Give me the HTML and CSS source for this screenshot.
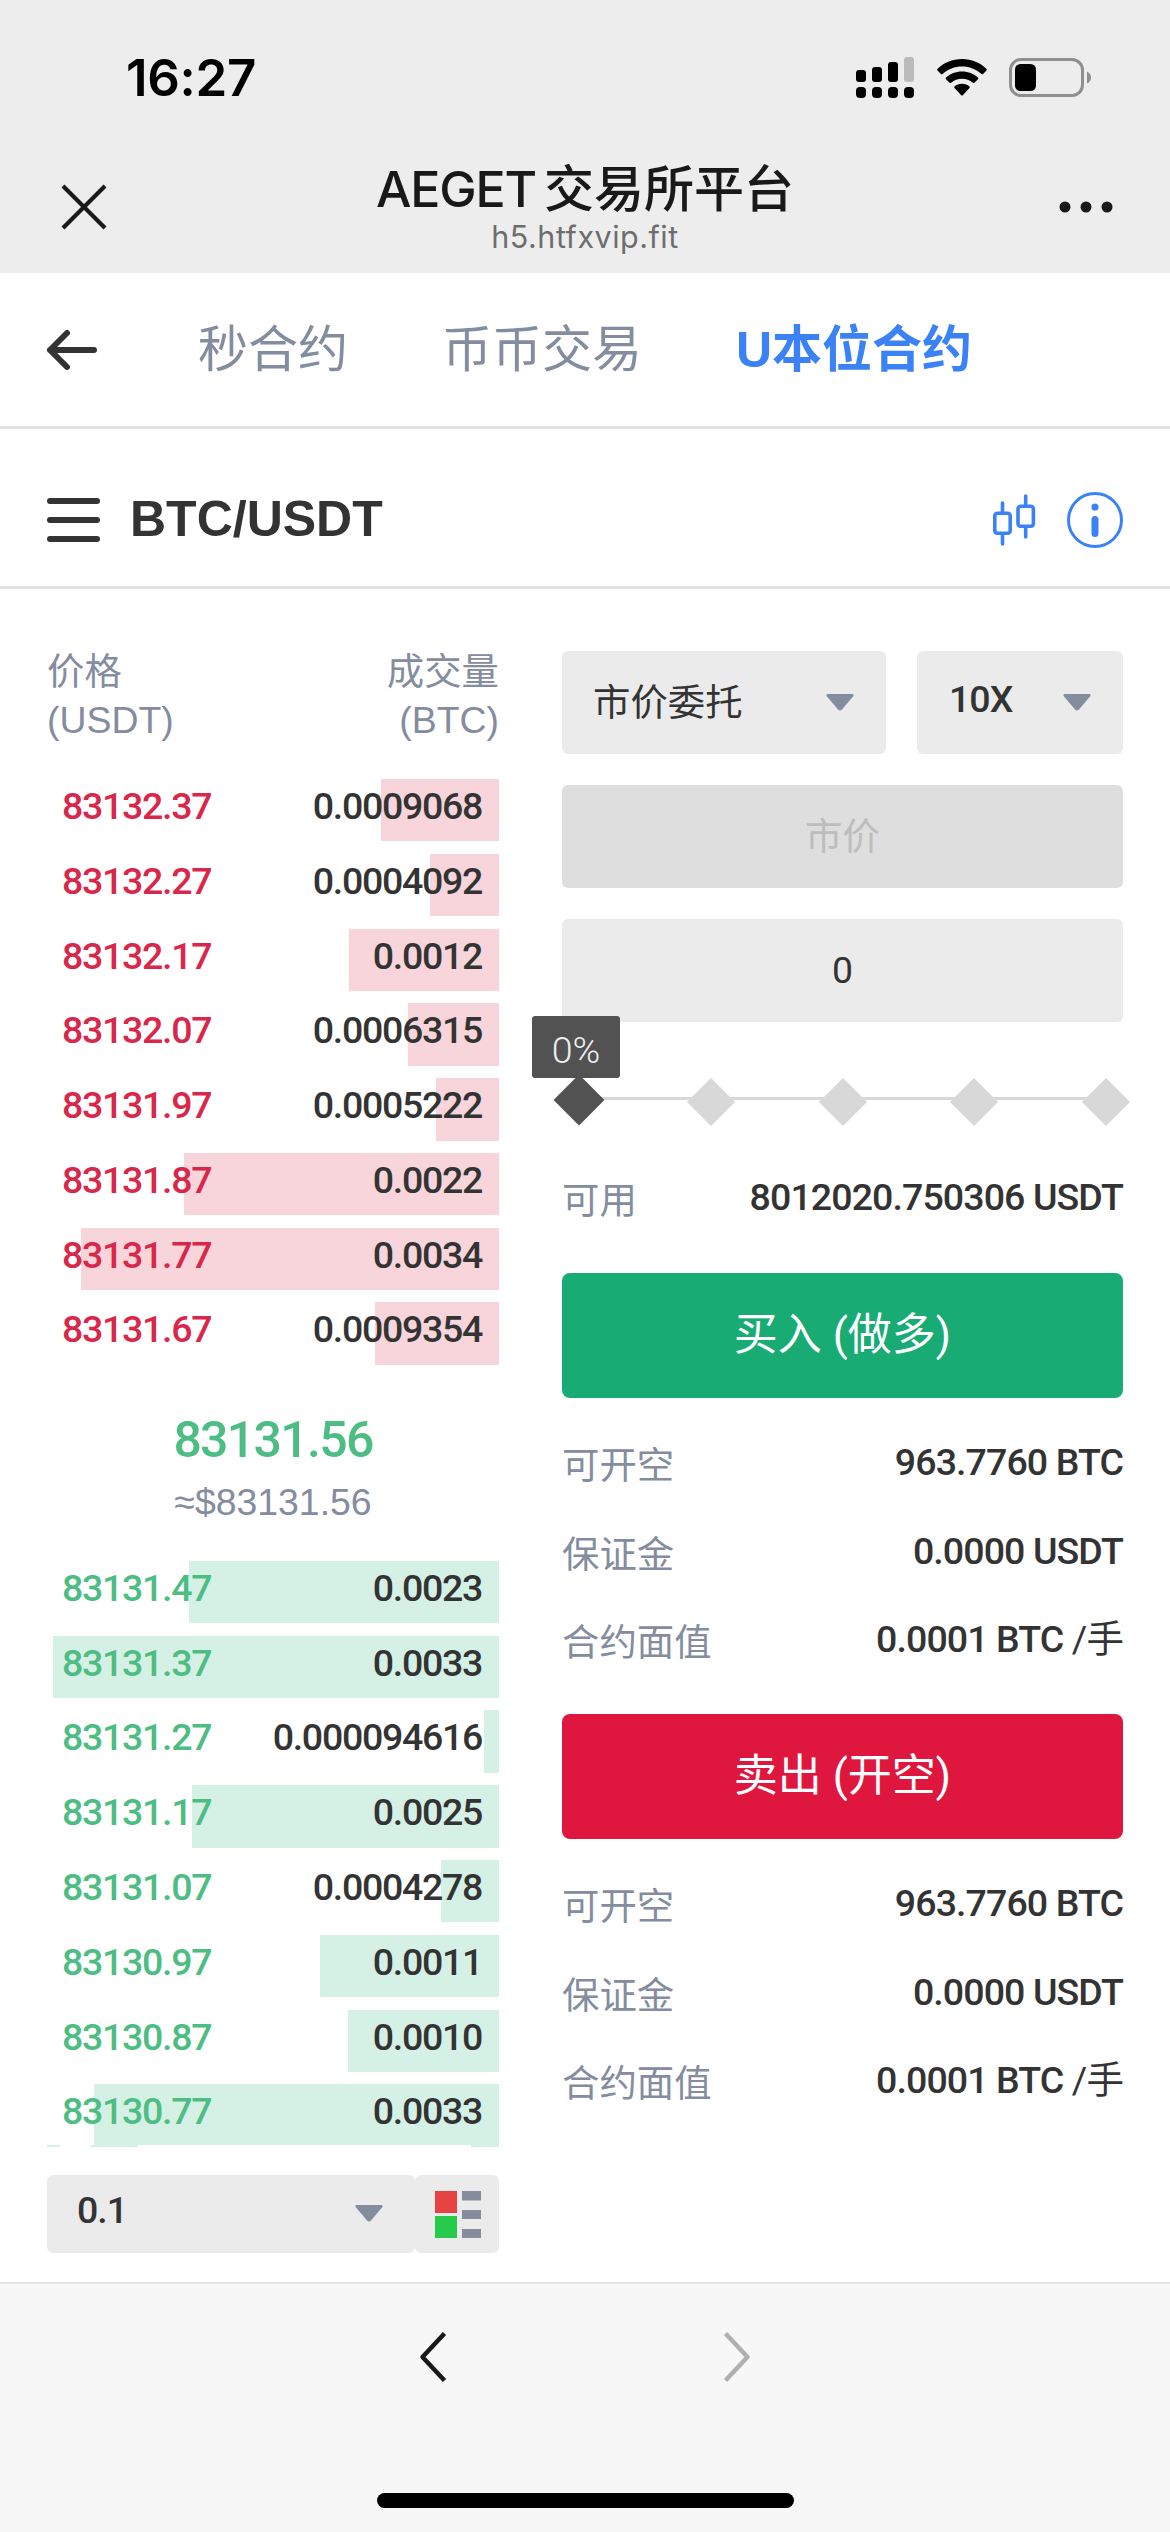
FILE: index.html
```
<!DOCTYPE html>
<html lang="zh-CN">

<head>
    <meta charset="UTF-8">
    <meta name="viewport" content="width=device-width, initial-scale=1.0">
    <title>AEGET交易所平台</title>
    <link rel="stylesheet" href="styles.css">
</head>

<body>
    <div class="page">
        <header class="top">
            <div class="status">
                <span class="time">16:27</span>
                <div class="status-icons">
                    <svg class="signal" width="58" height="42" viewBox="0 0 58 42">
                        <rect x="0" y="13" width="10" height="12" rx="3" />
                        <rect x="16" y="10" width="10" height="15" rx="3" />
                        <rect x="32" y="5" width="10" height="20" rx="3" />
                        <rect x="48" y="0" width="10" height="25" rx="3" fill="#bbb" />
                        <rect x="0" y="30" width="10" height="11" rx="4" />
                        <rect x="16" y="30" width="10" height="11" rx="4" />
                        <rect x="32" y="30" width="10" height="11" rx="4" />
                        <rect x="48" y="30" width="10" height="11" rx="4" />
                    </svg>
                    <svg class="wifi" width="50" height="37" viewBox="0 0 50 37">
                        <path d="M25 0C34.500 0 43.500 3.700 49.500 10Q50.200 10.800 49.500 11.600L46 15Q45.200 15.800 44.400 15C39 10 32.300 7.500 25 7.500S11 10 5.600 15Q4.800 15.800 4 15L.500 11.600Q-.200 10.800 .500 10C6.500 3.700 15.500 0 25 0Z" />
                        <path d="M25 12.500C31.300 12.500 36.800 14.800 41 18.600Q41.800 19.400 41 20.200L37.400 23.700Q36.600 24.400 35.800 23.700C32.800 21.200 29.300 19.800 25 19.800S17.200 21.200 14.200 23.700Q13.400 24.400 12.600 23.700L9 20.200Q8.200 19.400 9 18.600C13.200 14.800 18.700 12.500 25 12.500Z" />
                        <path d="M25 24.800C28 24.800 30.500 25.800 32.500 27.400Q33.300 28.200 32.500 29L25.800 36.200Q25 37 24.200 36.200L17.500 29Q16.700 28.200 17.500 27.400C19.500 25.800 22 24.800 25 24.800Z" />
                    </svg>
                    <svg class="battery" width="83" height="40" viewBox="0 0 83 40">
                        <rect x="1.500" y="1.500" width="72" height="36" rx="10.500" fill="none" stroke="#8f8f8f" stroke-width="3" />
                        <rect x="6" y="6" width="21" height="27" rx="5.500" />
                        <path d="M78 13.500Q82 15.500 82 19.500T78 25.500Z" fill="#8f8f8f" />
                    </svg>
                </div>
            </div>
            <div class="titlebar">
                <svg class="close" width="46" height="46" viewBox="0 0 46 46">
                    <path d="M2 2L44 44M44 2L2 44" stroke="#191919" stroke-width="4.200" fill="none" />
                </svg>
                <div class="titles">
                    <h1>AEGET<span>交易所平台</span></h1>
                    <p>h5.htfxvip.fit</p>
                </div>
                <svg class="more" width="54" height="12" viewBox="0 0 54 12">
                    <circle cx="6" cy="6" r="5.500" fill="#191919" />
                    <circle cx="27" cy="6" r="5.500" fill="#191919" />
                    <circle cx="48" cy="6" r="5.500" fill="#191919" />
                </svg>
            </div>
        </header>

        <nav class="tabs">
            <svg class="back" width="52" height="42" viewBox="0 0 52 42">
                <path d="M21 4L4 21L21 38M4 21H48" fill="none" stroke="#333" stroke-width="6" stroke-linecap="round" stroke-linejoin="round" />
            </svg>
            <a class="tab">秒合约</a>
            <a class="tab">币币交易</a>
            <a class="tab active">U本位合约</a>
        </nav>

        <div class="pair">
            <div class="menu"><i></i><i></i><i></i></div>
            <h2>BTC/USDT</h2>
            <svg class="candle" width="44" height="56" viewBox="0 0 44 56">
                <g fill="none" stroke="#3b82f6" stroke-width="3.600" stroke-linecap="round">
                    <rect x="2.800" y="21.300" width="15.400" height="20" rx="2.500" />
                    <rect x="26" y="14.300" width="15.400" height="20" rx="2.500" />
                    <path d="M10.500 11V20M10.500 43V52M33.700 4V13M33.700 36V45" />
                </g>
            </svg>
            <svg class="info" width="56" height="56" viewBox="0 0 56 56">
                <circle cx="28" cy="28" r="26.500" fill="none" stroke="#3b82f6" stroke-width="3" />
                <circle cx="28" cy="15" r="3.600" fill="#3b82f6" />
                <rect x="24.500" y="24" width="7" height="21" rx="3.500" fill="#3b82f6" />
            </svg>
        </div>

        <main class="trade">
            <!-- 盘口 -->
            <section class="book">
                <div class="book-head">
                    <span>价格<br>(USDT)</span>
                    <span class="tr">成交量<br>(BTC)</span>
                </div>
                <ul class="list sell">
                    <li><i style="width: 118px"></i><b>83132.37</b><span>0.0009068</span></li>
                    <li><i style="width: 69px"></i><b>83132.27</b><span>0.0004092</span></li>
                    <li><i style="width: 150px"></i><b>83132.17</b><span>0.0012</span></li>
                    <li><i style="width: 91px"></i><b>83132.07</b><span>0.0006315</span></li>
                    <li><i style="width: 63px"></i><b>83131.97</b><span>0.0005222</span></li>
                    <li><i style="width: 315px"></i><b>83131.87</b><span>0.0022</span></li>
                    <li><i style="width: 418px"></i><b>83131.77</b><span>0.0034</span></li>
                    <li><i style="width: 124px"></i><b>83131.67</b><span>0.0009354</span></li>
                </ul>
                <div class="price">
                    <strong>83131.56</strong>
                    <span>≈$83131.56</span>
                </div>
                <ul class="list buy">
                    <li><i style="width: 310px"></i><b>83131.47</b><span>0.0023</span></li>
                    <li><i style="width: 446px"></i><b>83131.37</b><span>0.0033</span></li>
                    <li><i style="width: 15px"></i><b>83131.27</b><span>0.000094616</span></li>
                    <li><i style="width: 307px"></i><b>83131.17</b><span>0.0025</span></li>
                    <li><i style="width: 58px"></i><b>83131.07</b><span>0.0004278</span></li>
                    <li><i style="width: 179px"></i><b>83130.97</b><span>0.0011</span></li>
                    <li><i style="width: 151px"></i><b>83130.87</b><span>0.0010</span></li>
                    <li><i style="width: 405px"></i><b>83130.77</b><span>0.0033</span></li>
                </ul>
                <div class="edge"></div>
                <div class="depth">
                    <div class="select step"><span>0.1</span><svg class="caret" width="28" height="17" viewBox="0 0 28 17"><path d="M2 0H26Q28.500 0 27 2.500L16 15.500Q14 17.500 12 15.500L1 2.500Q-.500 0 2 0Z" /></svg></div>
                    <div class="mode">
                        <svg width="46" height="47" viewBox="0 0 46 47">
                            <path d="M0 0H22V22H0Z" fill="#e84343" />
                            <path d="M0 25H22V47H0Z" fill="#28ca4b" />
                            <path d="M27 0H46V9.500H27ZM27 19H46V28H27ZM27 38H46V47H27Z" fill="#848c9d" />
                        </svg>
                    </div>
                </div>
            </section>

            <!-- 下单 -->
            <section class="order">
                <div class="selects">
                    <div class="select type"><span>市价委托</span><svg class="caret" width="28" height="17" viewBox="0 0 28 17"><path d="M2 0H26Q28.500 0 27 2.500L16 15.500Q14 17.500 12 15.500L1 2.500Q-.500 0 2 0Z" /></svg></div>
                    <div class="select lever"><span>10X</span><svg class="caret" width="28" height="17" viewBox="0 0 28 17"><path d="M2 0H26Q28.500 0 27 2.500L16 15.500Q14 17.500 12 15.500L1 2.500Q-.500 0 2 0Z" /></svg></div>
                </div>
                <div class="field disabled">市价</div>
                <div class="field">0</div>
                <div class="slider">
                    <i class="dot on"></i>
                    <i class="dot"></i>
                    <i class="dot"></i>
                    <i class="dot"></i>
                    <i class="dot"></i>
                    <div class="tip">0%</div>
                </div>
                <div class="row usable"><label>可用</label><span>8012020.750306 USDT</span></div>
                <div class="btn btn-buy">买入 (做多)</div>
                <div class="rows">
                    <div class="row"><label>可开空</label><span>963.7760 BTC</span></div>
                    <div class="row"><label>保证金</label><span>0.0000 USDT</span></div>
                    <div class="row"><label>合约面值</label><span>0.0001 BTC <em>/手</em></span></div>
                </div>
                <div class="btn btn-sell">卖出 (开空)</div>
                <div class="rows">
                    <div class="row"><label>可开空</label><span>963.7760 BTC</span></div>
                    <div class="row"><label>保证金</label><span>0.0000 USDT</span></div>
                    <div class="row"><label>合约面值</label><span>0.0001 BTC <em>/手</em></span></div>
                </div>
            </section>
        </main>

        <footer class="bottom">
            <div class="arrows">
                <svg width="28" height="52" viewBox="0 0 28 52"><path d="M25.500 2.500L3.500 26L25.500 49.500" fill="none" stroke="#191919" stroke-width="4.500" stroke-linejoin="round" /></svg>
                <svg width="28" height="52" viewBox="0 0 28 52"><path d="M2.500 2.500L24.500 26L2.500 49.500" fill="none" stroke="#b0b0b0" stroke-width="4.500" stroke-linejoin="round" /></svg>
            </div>
            <div class="home"></div>
        </footer>
    </div>
</body>

</html>
```

FILE: styles.css
```
* {
    box-sizing: border-box;
    margin: 0;
    padding: 0;
}

body {
    background: #fff;
    color: #333;
    font-family: "Liberation Sans", "Noto Sans CJK SC", sans-serif;
    font-size: 37.4px;
}

i, b, em {
    font-style: normal;
    font-weight: 500;
}

svg {
    display: block;
    flex: none;
}

.page {
    display: flex;
    flex-direction: column;
    width: 1170px;
    height: 2532px;
    overflow: hidden;
}

/* 状态栏 + 标题 */
.top {
    height: 273px;
    background: #ededed;
}

.status {
    display: flex;
    justify-content: space-between;
    height: 155px;
    padding: 0 78px 0 126px;
}

.time {
    font: 600 51px/156px Inter, sans-serif;
    color: #000;
    letter-spacing: -.3px;
}

.status-icons {
    display: flex;
    padding-top: 57px;
}

.wifi {
    margin: 2px 22px 0 23px;
}

.battery {
    margin-top: 1px;
}

.titlebar {
    display: flex;
    justify-content: space-between;
    padding: 0 57px 0 61px;
}

.close {
    margin-top: 29px;
}

.more {
    margin-top: 46px;
}

.titles {
    padding-left: 4px;
    text-align: center;
    color: #191919;
}

.titles h1 {
    font: 500 50px/69px Inter, "Noto Sans CJK SC", sans-serif;
    letter-spacing: -1.2px;
}

.titles h1 span {
    margin-left: 8px;
    letter-spacing: 0;
}

.titles p {
    font: 400 30.5px/25px Inter, sans-serif;
    letter-spacing: .5px;
    color: #6d6d6d;
}

/* 导航 */
.tabs {
    display: flex;
    align-items: center;
    height: 156px;
    padding-left: 46px;
    border-bottom: 3px solid #e2e2e2;
}

.tab {
    margin-right: 94px;
    font-size: 50px;
    line-height: 60px;
    color: #848c9f;
}

.back {
    margin: 0 100px 0 0;
}

.tab.active {
    margin-right: 0;
    color: #3b82f6;
    font-weight: 700;
}

.pair {
    display: flex;
    align-items: center;
    height: 160px;
    padding: 0 47px;
    border-bottom: 3px solid #e2e2e2;
}

.menu {
    display: flex;
    flex-direction: column;
    justify-content: space-between;
    width: 53px;
    height: 44px;
    margin-top: 24px;
}

.menu i {
    height: 6px;
    border-radius: 3px;
    background: #333;
}

.pair h2 {
    margin: 22px auto 0 30px;
    font-size: 50px;
    line-height: 60px;
}

.candle {
    margin: 25px 31px 0 0;
}

.info {
    margin-top: 25px;
}

/* 交易区 */
.trade {
    display: flex;
    justify-content: space-between;
    height: 1693px;
    padding: 62px 47px 0;
}

.book {
    width: 452px;
}

.book-head {
    display: flex;
    justify-content: space-between;
    height: 131px;
    margin-top: -3px;
    line-height: 48px;
    color: #848c9f;
}

.tr {
    text-align: right;
}

.list {
    list-style: none;
}

.list li {
    position: relative;
    display: flex;
    justify-content: space-between;
    height: 62.4px;
    margin-bottom: 12.4px;
    padding: 0 17px 0 15px;
    font: 500 37.5px/54px Roboto, sans-serif;
    letter-spacing: -1.3px;
}

.list li:last-child {
    margin-bottom: 0;
}

/* 深度背景条 */
.list li i {
    position: absolute;
    top: 0;
    right: 0;
    height: 100%;
}

.list b, .list span {
    position: relative;
}

.sell i {
    background: #f7d5da;
}

.sell b {
    color: #d9274b;
}

.buy i {
    background: #d5f1e6;
}

.buy b {
    color: #4dbd83;
}

.price {
    display: flex;
    flex-direction: column;
    align-items: center;
    height: 196px;
    padding-top: 44px;
    color: #848c9f;
}

.price strong {
    font: 500 50px/62px Roboto, sans-serif;
    letter-spacing: -1.7px;
    color: #4dbd83;
}

.price span {
    line-height: 62px;
}

.edge {
    position: relative;
    height: 2px;
    margin-top: -2px;
    background: linear-gradient(90deg, #d5f1e6 13px, #fff 13px 44px, #d5f1e6 44px 91px, #fff 91px 424px, #d5f1e6 424px);
}

.depth {
    display: flex;
    margin-top: 28px;
}

.select {
    display: flex;
    align-items: center;
    justify-content: space-between;
    height: 103px;
    padding: 0 32px;
    border-radius: 6px;
    background: #ebebeb;
}

.caret {
    fill: #848ca0;
}

.select.step {
    width: 368px;
    height: 78px;
    padding-left: 30px;
    font: 500 37.5px/68px Roboto, sans-serif;
}

.step span, .lever span {
    padding-bottom: 8px;
    letter-spacing: -1px;
}

.mode {
    display: flex;
    align-items: center;
    justify-content: center;
    width: 84px;
    height: 78px;
    padding: 1px 0 0 1px;
    border-radius: 6px;
    background: #ebebeb;
}

.order {
    width: 561px;
}

.selects {
    display: flex;
    justify-content: space-between;
}

.select.type {
    width: 324px;
    padding-left: 31px;
}

.type span {
    padding-bottom: 6px;
}

.select.lever {
    width: 206px;
    font: 500 37.5px/46px Roboto, sans-serif;
}

.field {
    height: 103px;
    margin-top: 31px;
    border-radius: 6px;
    background: #ebebeb;
    font-family: Roboto, "Noto Sans CJK SC", sans-serif;
    line-height: 103px;
    text-align: center;
}

.field.disabled {
    background: #dedede;
    color: #bdbdbd;
    line-height: 104px;
}

.slider {
    position: relative;
    display: flex;
    justify-content: space-between;
    width: 561px;
    height: 48px;
    margin: 56px 0 0;
}

.slider::before {
    content: "";
    position: absolute;
    left: 17px;
    top: 19px;
    width: 527px;
    height: 3px;
    background: #d8d8d8;
}

.dot {
    position: relative;
    width: 34px;
    height: 34px;
    margin-top: 7px;
    background: #d8d8d8;
    transform: rotate(45deg);
}

.dot.on {
    width: 36px;
    height: 36px;
    margin: 4px -1px 0;
    background: #525252;
}

.tip {
    position: absolute;
    left: -30px;
    top: -62px;
    width: 88px;
    height: 62px;
    border-radius: 3px;
    background: #525252;
    color: #eee;
    font: 300 37.5px/68px Roboto, sans-serif;
    text-align: center;
}

.row {
    display: flex;
    align-items: center;
    justify-content: space-between;
    height: 88.5px;
}

.row label {
    padding-bottom: 4px;
    color: #848c9f;
}

.row span {
    padding-bottom: 6px;
    font: 500 37.5px/46px Roboto, "Noto Sans CJK SC", sans-serif;
    letter-spacing: -.9px;
}

.row em {
    font-weight: 400;
}

.usable {
    height: 147px;
}

.btn {
    height: 125px;
    border-radius: 8px;
    color: #fff;
    font: 400 44px/125px Roboto, "Noto Sans CJK SC", sans-serif;
    text-align: center;
}

.btn-buy {
    background: #19ab74;
}

.btn-sell {
    background: #df173f;
}

.rows {
    height: 316px;
    padding-top: 23px;
}

/* 底部 */
.bottom {
    flex: 1;
    border-top: 2px solid #e3e3e3;
    background: #f7f7f7;
}

.arrows {
    display: flex;
    justify-content: center;
    gap: 276px;
    padding-top: 47px;
}

.home {
    width: 417px;
    height: 15px;
    margin: 110px auto 0;
    border-radius: 8px;
    background: #000;
}
```
